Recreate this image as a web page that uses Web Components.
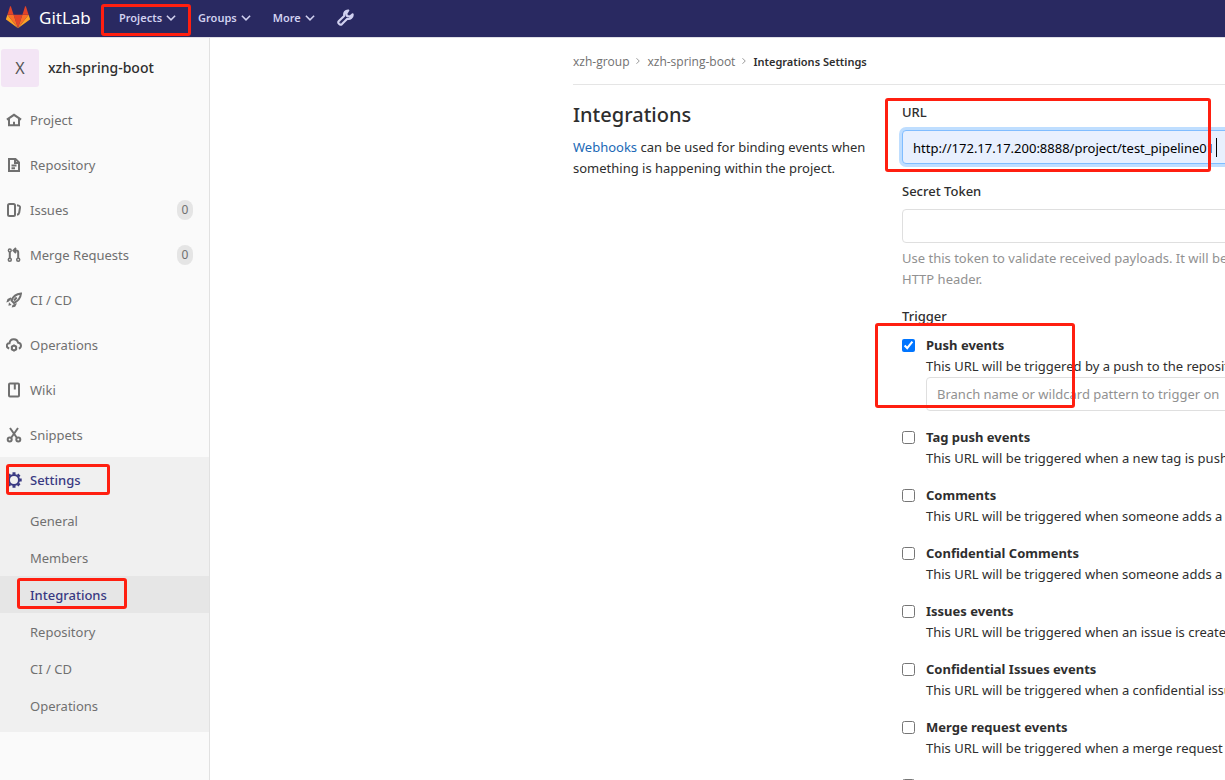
<!DOCTYPE html>
<html lang="en">
<head>
<meta charset="utf-8">
<title>Integrations Settings · xzh-spring-boot · GitLab</title>
<style>
  body {
    margin: 0;
    font: 13px/21px "Noto Sans", "Open Sans", sans-serif;
    color: #2e2e2e;
    background: #fff;
    --mark: #ff1f10;
  }
</style>
</head>
<body>
<gl-app></gl-app>
<script>
const ICONS = {
  home: '<path d="M.9 7.600 8 2.800l7.100 4.800M3 7v6.200h10V7M8 13V9.800"/>',
  doc: '<path d="M3 2h6.500L13 5.500V14H3zM9 2v4h4M5.500 8.500h5M5.500 11.200h3.500"/>',
  issues: '<rect x="2" y="2" width="7" height="12" rx="1.500"/><path d="M11 3.200c2.500.3 3.200.8 3 2.500l-.8 5c-.2 1.300-.8 1.900-2.200 2"/>',
  merge: '<g stroke-width="1.500"><circle cx="3.800" cy="3.500" r="1.400"/><circle cx="3.800" cy="12.700" r="1.500"/><circle cx="12.200" cy="12.700" r="1.500"/></g><path d="M3.800 5v6M12.200 11V5.500c0-1.400-.8-2-2-2H8.500M10 1 7.500 3.500 10 6"/>',
  rocket: '<path d="M5.500 8.500C7 4.500 10.500 2 15 1.500 14.500 6 12 9 8 11zM8 8.500l2.700-3"/><path fill="currentColor" stroke="none" d="M4.500 5.500 1.500 7 .300 10.500l2.200-.8L6 6.200zM9.500 11.500l-3 1.500-.8 2.600 3.500-.8 1.800-3.600zM3 10.300l2.700 2.700-3.300.8z"/>',
  cloud: '<path d="M3.200 11.500C-.8 10.200.8 6 3.500 6.200 4.200 1.200 11 1 12.200 5.800c3.400.1 3.700 4.700.6 5.700"/><circle cx="8" cy="11" r="2.200"/><path stroke-width="1.500" d="M8 7.500v1.300M8 13.200v1.300M5 9.300l1 .6M10 12.100l1 .6M5 12.700l1-.6M10 9.900l1-.6"/>',
  book: '<rect x="3" y="1.500" width="10" height="13" rx="1"/><path d="M8.800 2v5.500"/>',
  scissors: '<circle cx="3.700" cy="12.500" r="2"/><circle cx="12.300" cy="12.500" r="2"/><path d="M4 1 11 11M12 1 5 11"/>',
  gear: '<circle cx="8" cy="8" r="5"/><path stroke-width="3" d="M8 .3v2.400M8 13.300v2.400M.3 8h2.400M13.300 8h2.400M2.600 2.600l1.500 1.500M11.900 11.900l1.500 1.500M2.600 13.400l1.500-1.500M11.900 4.100l1.500-1.500"/>',
  chevron: '<path d="M2.500 5 8 10.500 13.500 5"/>',
  right: '<path d="m5 2.500 5.500 5.500L5 13.500"/>',
  wrench: '<path stroke-linejoin="round" d="M10.600 1.400C8 1.200 6.100 3.600 6.900 6.300L1.800 11.200c-1.700 1.800 1 4.700 2.900 3L9.700 9.200c2.700.7 5.400-1.300 5-4.200l-2.500 2.200-2.800-.7-.7-2.200z"/><path d="M3.300 12.800h.1"/>'
};

class GlIcon extends HTMLElement {
  connectedCallback() {
    this.attachShadow({ mode: 'open' }).innerHTML = `
      <style>
        :host { display: block; flex: none; width: var(--icon-size, 16px); height: var(--icon-size, 16px); }
        svg { display: block; width: 100%; height: 100%; fill: none; stroke: currentColor; stroke-width: 2; }
      </style>
      <svg viewBox="0 0 16 16" aria-hidden="true">${ICONS[this.getAttribute('name')]}</svg>`;
  }
}
customElements.define('gl-icon', GlIcon);

class GlNavbar extends HTMLElement {
  connectedCallback() {
    this.attachShadow({ mode: 'open' }).innerHTML = `
      <style>
        :host { display: block; background: #292961; color: #d1d1f0; border-bottom: 1px solid #dfdfe6; }
        header { display: flex; align-items: center; height: 37px; padding: 0 0 2px 6px; box-sizing: border-box; }
        .brand { display: flex; align-items: center; gap: 9px; color: #fff; font-size: 17px; text-decoration: none; width: 113px; }
        .brand svg { width: 24px; height: 23px; }
        nav { display: flex; align-items: center; gap: 21px; }
        button { position: relative; display: flex; align-items: center; gap: 3px; border: 0; padding: 0; margin: 0;
                 background: none; color: inherit; font: 600 11px/21px "Noto Sans", sans-serif; --icon-size: 12px; }
        button.marked::after { content: ""; position: absolute; inset: -3px -14px -8px -18px; border: 3px solid var(--mark); border-radius: 3px; }
        .wrench { --icon-size: 17px; }
      </style>
      <header>
        <a class="brand" href="#">
          <svg viewBox="0 -1 36 34" aria-hidden="true">
            <path fill="#e24329" d="m18 32 6.600-20.200H11.400z"/>
            <path fill="#fc6d26" d="m18 32-6.600-20.200H2.100z"/>
            <path fill="#fca326" d="m2.100 11.800-2 6.200c-.2.600 0 1.200.5 1.500L18 32z"/>
            <path fill="#e24329" d="M2.100 11.800h9.300L7.400-.5c-.2-.6-1.100-.6-1.300 0z"/>
            <path fill="#fc6d26" d="m18 32 6.600-20.200h9.300z"/>
            <path fill="#fca326" d="m33.900 11.800 2 6.200c.2.600 0 1.200-.5 1.500L18 32z"/>
            <path fill="#e24329" d="M33.900 11.800h-9.300l4-12.300c.2-.6 1.100-.6 1.300 0z"/>
          </svg>
          <span>GitLab</span>
        </a>
        <nav>
          <button class="marked">Projects <gl-icon name="chevron"></gl-icon></button>
          <button>Groups <gl-icon name="chevron"></gl-icon></button>
          <button>More <gl-icon name="chevron"></gl-icon></button>
          <button class="wrench" aria-label="Admin area"><gl-icon name="wrench"></gl-icon></button>
        </nav>
      </header>`;
  }
}
customElements.define('gl-navbar', GlNavbar);

class GlNavItem extends HTMLElement {
  connectedCallback() {
    const icon = this.getAttribute('icon'), count = this.getAttribute('count');
    this.attachShadow({ mode: 'open' }).innerHTML = `
      <style>
        :host { display: block; color: #707070; }
        :host([active]) { color: #393982; font-weight: 500; }
        :host([sub][active]) { background: #e6e6e6; }
        a { display: flex; align-items: center; gap: 8px; height: 45px; padding: 0 16px 0 6px; color: inherit; text-decoration: none; }
        :host([sub]) a { height: 37px; padding-left: 30px; }
        .label { flex: 1; padding-top: 2px; }
        .text { position: relative; }
        :host([marked]) .text::after { content: ""; position: absolute; inset: -7px -29px -6px -24px; border: 3px solid var(--mark); border-radius: 3px; }
        :host([sub][marked]) .text::after { inset: -8px -20px -5px -13px; }
        .count { width: 16px; height: 20px; line-height: 20px; border-radius: 8px; background: #e5e5e5; font-size: 12px; text-align: center; }
      </style>
      <a href="#">${icon ? `<gl-icon name="${icon}"></gl-icon>` : ''}<span class="label"><span class="text"><slot></slot></span></span>${count ? `<span class="count">${count}</span>` : ''}</a>`;
  }
}
customElements.define('gl-nav-item', GlNavItem);

class GlSidebar extends HTMLElement {
  connectedCallback() {
    this.attachShadow({ mode: 'open' }).innerHTML = `
      <style>
        :host { display: block; background: #fafafa; border-right: 1px solid #e1e1e1; }
        .project { display: flex; align-items: center; gap: 9px; height: 59px; padding-left: 1px; color: #2e2e2e; text-decoration: none; }
        .avatar { width: 38px; height: 38px; line-height: 38px; border-radius: 3px; background: #f3e5f5; color: #555; font-size: 16px; text-align: center; }
        .name { font-size: 14px; font-weight: 500; }
        .open { background: #f0f0f0; padding-bottom: 8px; }
      </style>
      <a class="project" href="#"><span class="avatar">X</span><span class="name">xzh-spring-boot</span></a>
      <nav>
        <gl-nav-item icon="home">Project</gl-nav-item>
        <gl-nav-item icon="doc">Repository</gl-nav-item>
        <gl-nav-item icon="issues" count="0">Issues</gl-nav-item>
        <gl-nav-item icon="merge" count="0">Merge Requests</gl-nav-item>
        <gl-nav-item icon="rocket">CI / CD</gl-nav-item>
        <gl-nav-item icon="cloud">Operations</gl-nav-item>
        <gl-nav-item icon="book">Wiki</gl-nav-item>
        <gl-nav-item icon="scissors">Snippets</gl-nav-item>
        <div class="open">
          <gl-nav-item icon="gear" active marked>Settings</gl-nav-item>
          <gl-nav-item sub>General</gl-nav-item>
          <gl-nav-item sub>Members</gl-nav-item>
          <gl-nav-item sub active marked>Integrations</gl-nav-item>
          <gl-nav-item sub>Repository</gl-nav-item>
          <gl-nav-item sub>CI / CD</gl-nav-item>
          <gl-nav-item sub>Operations</gl-nav-item>
        </div>
      </nav>`;
  }
}
customElements.define('gl-sidebar', GlSidebar);

class GlBreadcrumbs extends HTMLElement {
  connectedCallback() {
    this.attachShadow({ mode: 'open' }).innerHTML = `
      <style>
        :host { display: flex; align-items: center; gap: 5px; height: 46px; border-bottom: 1px solid #e5e5e5; font-family: "Open Sans", sans-serif; font-size: 12px; color: #707070; --icon-size: 8px; }
        a { color: inherit; text-decoration: none; }
        a[aria-current] { color: #2e2e2e; font: 600 11px/21px "Noto Sans", sans-serif; }
        gl-icon { color: #999; }
      </style>
      <a href="#">xzh-group</a><gl-icon name="right"></gl-icon>
      <a href="#">xzh-spring-boot</a><gl-icon name="right"></gl-icon>
      <a href="#" aria-current="page">Integrations Settings</a>`;
  }
}
customElements.define('gl-breadcrumbs', GlBreadcrumbs);

class GlField extends HTMLElement {
  connectedCallback() {
    const focused = this.hasAttribute('focused');
    this.attachShadow({ mode: 'open' }).innerHTML = `
      <style>
        :host { display: block; position: relative; }
        label { display: block; margin-bottom: 7px; font-weight: 500; }
        .box { position: relative; }
        input { display: block; box-sizing: border-box; width: 100%; height: 34px; padding: 2px 10px 0; border: 1px solid #dfdfdf; border-radius: 4px;
                background: #fff; color: #000; font: 13px/21px "Noto Sans", sans-serif; outline: 0; }
        :host([focused]) input { border-color: #80bdff; background: #e8f0fe; box-shadow: 0 0 0 3px #bfdeff; }
        .caret { position: absolute; left: 314px; top: 8px; width: 1px; height: 19px; background: #000; }
        :host([focused])::after { content: ""; position: absolute; left: -17px; top: -4px; bottom: -8px; width: 320px; border: 3px solid var(--mark); border-radius: 3px; }
      </style>
      <label for="f">${this.getAttribute('label')}</label>
      <div class="box"><input id="f" type="text" value="${this.getAttribute('value') || ''}">${focused ? '<span class="caret"></span>' : ''}</div>`;
  }
}
customElements.define('gl-field', GlField);

class GlTrigger extends HTMLElement {
  connectedCallback() {
    this.attachShadow({ mode: 'open' }).innerHTML = `
      <style>
        :host { display: grid; grid-template-columns: 13px 1fr; column-gap: 11px; position: relative; }
        input[type=checkbox] { width: 13px; height: 13px; margin: 4px 0 0; accent-color: #0075ff; }
        label { font-weight: 700; display: block; }
        p { margin: 0; }
        ::slotted(*) { display: block; }
        :host([marked])::after { content: ""; position: absolute; left: -27px; top: -12px; bottom: 3px; width: 194px; border: 3px solid var(--mark); border-radius: 3px; }
      </style>
      <input type="checkbox" id="c" ${this.hasAttribute('checked') ? 'checked' : ''}>
      <div><label for="c">${this.getAttribute('label')}</label><p>${this.getAttribute('hint')}</p><slot></slot></div>`;
  }
}
customElements.define('gl-trigger', GlTrigger);

class GlBranchFilter extends HTMLElement {
  connectedCallback() {
    this.attachShadow({ mode: 'open' }).innerHTML = `
      <style>
        :host { display: block; }
        input { display: block; box-sizing: border-box; width: 100%; height: 34px; padding: 0 10px; border: 1px solid #dfdfdf; border-radius: 4px;
                background: #fff; font: 13px/21px "Noto Sans", sans-serif; }
        input::placeholder { color: #919191; opacity: 1; }
      </style>
      <input type="text" aria-label="Branch filter" placeholder="Branch name or wildcard pattern to trigger on">`;
  }
}
customElements.define('gl-branch-filter', GlBranchFilter);

class GlIntegrations extends HTMLElement {
  connectedCallback() {
    this.attachShadow({ mode: 'open' }).innerHTML = `
      <style>
        :host { display: grid; grid-template-columns: 299px 1fr; column-gap: 30px; padding-top: 17px; }
        h4 { margin: 0; font-size: 20px; line-height: 26px; font-weight: 500; }
        p { margin: 0; }
        .intro p { margin-top: 9px; }
        a { color: #1b69b6; text-decoration: none; }
        .help { margin: 5px 0 16px; color: #919191; }
        gl-field + gl-field { margin-top: 17px; }
        fieldset { border: 0; margin: 0; padding: 0; min-width: 0; }
        legend { padding: 0; font-weight: 500; }
        .list { display: grid; gap: 16px; margin-top: 8px; }
      </style>
      <section class="intro">
        <h4>Integrations</h4>
        <p><a href="#">Webhooks</a> can be used for binding events when something is happening within the project.</p>
      </section>
      <form>
        <gl-field label="URL" value="http://172.17.17.200:8888/project/test_pipeline01" focused></gl-field>
        <gl-field label="Secret Token"></gl-field>
        <p class="help">Use this token to validate received payloads. It will be sent with the request in the X-Gitlab-Token<br>HTTP header.</p>
        <fieldset>
          <legend>Trigger</legend>
          <div class="list">
            <gl-trigger checked marked label="Push events" hint="This URL will be triggered by a push to the repository"><gl-branch-filter></gl-branch-filter></gl-trigger>
            <gl-trigger label="Tag push events" hint="This URL will be triggered when a new tag is pushed to the repository"></gl-trigger>
            <gl-trigger label="Comments" hint="This URL will be triggered when someone adds a comment"></gl-trigger>
            <gl-trigger label="Confidential Comments" hint="This URL will be triggered when someone adds a comment on a confidential issue"></gl-trigger>
            <gl-trigger label="Issues events" hint="This URL will be triggered when an issue is created/updated/merged"></gl-trigger>
            <gl-trigger label="Confidential Issues events" hint="This URL will be triggered when a confidential issue is created/updated/merged"></gl-trigger>
            <gl-trigger label="Merge request events" hint="This URL will be triggered when a merge request is created/updated/merged"></gl-trigger>
            <gl-trigger label="Job events" hint="This URL will be triggered when the job status changes"></gl-trigger>
          </div>
        </fieldset>
      </form>`;
  }
}
customElements.define('gl-integrations', GlIntegrations);

class GlApp extends HTMLElement {
  connectedCallback() {
    this.attachShadow({ mode: 'open' }).innerHTML = `
      <style>
        :host { display: grid; grid-template: auto minmax(0, 1fr) / 210px minmax(0, 1fr); height: 100vh; overflow: hidden; }
        gl-navbar { grid-column: 1 / -1; }
        main { overflow: hidden; padding-left: 363px; }
        .content { min-width: 990px; }
      </style>
      <gl-navbar></gl-navbar>
      <gl-sidebar></gl-sidebar>
      <main><div class="content"><gl-breadcrumbs></gl-breadcrumbs><gl-integrations></gl-integrations></div></main>`;
  }
}
customElements.define('gl-app', GlApp);
</script>
</body>
</html>
